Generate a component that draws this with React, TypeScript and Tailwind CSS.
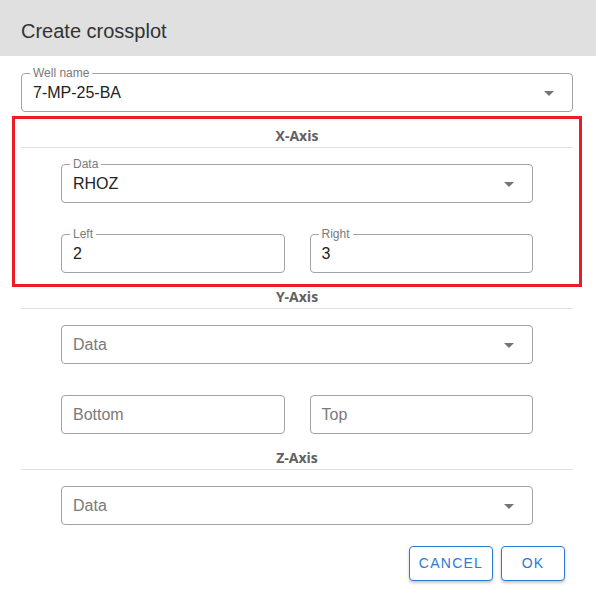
import React from "react";

function Arrow() {
  return (
    <svg width="24" height="24" viewBox="0 0 24 24" className="shrink-0">
      <path d="M7 10l5 5 5-5z" fill="rgba(0,0,0,0.54)" />
    </svg>
  );
}

function Field({
  label,
  value,
  placeholder,
  select,
}: {
  label?: string;
  value?: string;
  placeholder?: string;
  select?: boolean;
}) {
  return (
    <div className="relative h-[39px] rounded-[4px] border border-[#a3a3a3] flex items-center pl-[11px] pr-[11px]">
      {label && (
        <span className="absolute left-[8px] top-[-8px] bg-white px-[3px] text-[12px] leading-[14px] text-[#7a7a7a]">
          {label}
        </span>
      )}
      <span
        className={
          "flex-1 text-[16px] leading-[20px] pt-[1px] " +
          (value ? "text-[#222]" : "text-[#7a7a7a]")
        }
      >
        {value ?? placeholder}
      </span>
      {select && <Arrow />}
    </div>
  );
}

function Section({
  title,
  children,
  highlighted,
}: {
  title: string;
  children: React.ReactNode;
  highlighted?: boolean;
}) {
  return (
    <div className="relative">
      <div className="h-[20px] flex items-center justify-center pb-[3px] text-[14px] leading-[16px] font-bold text-[#616161] font-['Open_Sans',sans-serif]">
        {title}
      </div>
      <div className="h-px bg-[#e0e0e0]" />
      <div className="px-[40px]">{children}</div>
      {highlighted && (
        <div className="absolute left-[-9px] right-[-9px] top-[-11px] bottom-[1px] border-[3px] border-[#ec1c24] pointer-events-none" />
      )}
    </div>
  );
}

export default function App() {
  return (
    <div className="w-[596px] h-[609px] bg-white font-['Liberation_Sans',Arial,sans-serif]">
      <div className="h-[56px] bg-[#e0e0e0] flex items-center px-[21px] text-[20px] text-[#333] pt-[6px]">
        Create crossplot
      </div>
      <div className="pl-[21px] pr-[23px] pt-[17px]">
        <Field label="Well name" value="7-MP-25-BA" select />
        <div className="mt-[15px]">
          <Section title="X-Axis" highlighted>
            <div className="pt-[16px] pb-[15px]">
              <Field label="Data" value="RHOZ" select />
              <div className="grid grid-cols-2 gap-[25px] mt-[31px]">
                <Field label="Left" value="2" />
                <Field label="Right" value="3" />
              </div>
            </div>
          </Section>
          <Section title="Y-Axis">
            <div className="pt-[16px] pb-[15px]">
              <Field placeholder="Data" select />
              <div className="grid grid-cols-2 gap-[25px] mt-[31px]">
                <Field placeholder="Bottom" />
                <Field placeholder="Top" />
              </div>
            </div>
          </Section>
          <Section title="Z-Axis">
            <div className="pt-[16px]">
              <Field placeholder="Data" select />
            </div>
          </Section>
        </div>
        <div className="mt-[21px] flex justify-end gap-[8px] pr-[8px]">
          <button className="h-[35px] w-[84px] rounded-[4px] border border-[#2a7bd4] text-[#2a7bd4] text-[14px] tracking-[0.09em] shadow-[0_2px_3px_rgba(0,0,0,0.22)] bg-white">
            CANCEL
          </button>
          <button className="h-[35px] w-[64px] rounded-[4px] border border-[#2a7bd4] text-[#2a7bd4] text-[14px] tracking-[0.09em] shadow-[0_2px_3px_rgba(0,0,0,0.22)] bg-white">
            OK
          </button>
        </div>
      </div>
    </div>
  );
}
